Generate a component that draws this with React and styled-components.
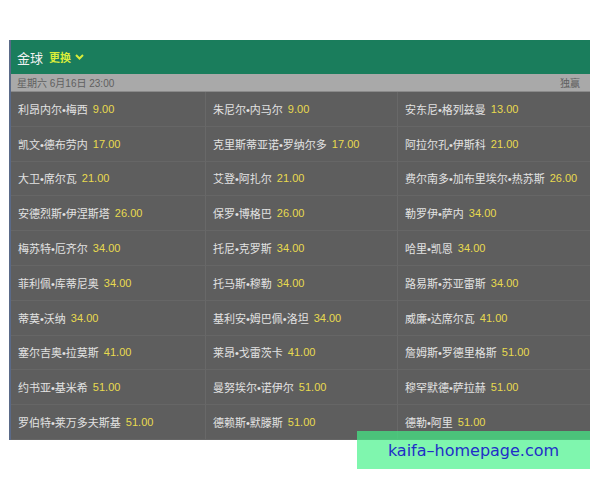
import React from 'react';
import styled, { createGlobalStyle } from 'styled-components';

const GlobalStyle = createGlobalStyle`
    html, body {
        margin: 0;
        padding: 0;
        background: #fff;
    }
    body {
        font-family: "Liberation Sans", "Noto Sans CJK SC", sans-serif;
    }
`;

const Page = styled.div`
    position: relative;
    width: 600px;
    height: 480px;
    padding: 40px 10px 0 9px;
    box-sizing: border-box;
`;

const Panel = styled.div`
    background: #5e5e5e;
    border-left: 2px solid #5a6a88;
    overflow: hidden;
`;

const Header = styled.div`
    height: 34px;
    display: flex;
    align-items: center;
    gap: 6px;
    padding-left: 8px;
    background: #1a7d5c;
    margin-left: -2px;
`;

const Title = styled.span`
    color: #f2f2f2;
    font-size: 13px;
`;

const Switch = styled.span`
    display: flex;
    align-items: center;
    gap: 4px;
    color: #d8ec3a;
    font-size: 11px;
    font-weight: bold;
`;

const DateBar = styled.div`
    height: 17px;
    display: flex;
    align-items: center;
    justify-content: space-between;
    padding: 0 10px 0 8px;
    background: #a9a9a9;
    border-bottom: 1px solid #8a8a8a;
    color: #606060;
    font-size: 10px;
    margin-left: -2px;
`;

const Grid = styled.div`
    display: grid;
    grid-template-columns: 195px 192px 1fr;
`;

const Cell = styled.div`
    height: 34.8px;
    box-sizing: border-box;
    display: flex;
    align-items: center;
    gap: 5px;
    padding-left: 7px;
    border-bottom: 1px solid #666;
    border-right: ${(p) => (p.last ? 'none' : '1px solid #686868')};
    color: #e2e2e2;
    font-size: 11px;
    white-space: nowrap;
    overflow: hidden;
`;

const Odds = styled.span`
    color: #e8da4e;
    font-family: "Liberation Sans", sans-serif;
    font-size: 11px;
`;

const Watermark = styled.div`
    position: absolute;
    left: 357px;
    top: 431px;
    width: 233px;
    height: 38px;
    display: flex;
    align-items: center;
    justify-content: center;
    background: rgba(66, 242, 135, 0.68);
    color: #1f2fc8;
    font-family: "DejaVu Sans", sans-serif;
    font-size: 16px;
`;

const rows = [
    [['利昂内尔•梅西', '9.00'], ['朱尼尔•内马尔', '9.00'], ['安东尼•格列兹曼', '13.00']],
    [['凯文•德布劳内', '17.00'], ['克里斯蒂亚诺•罗纳尔多', '17.00'], ['阿拉尔孔•伊斯科', '21.00']],
    [['大卫•席尔瓦', '21.00'], ['艾登•阿扎尔', '21.00'], ['费尔南多•加布里埃尔•热苏斯', '26.00']],
    [['安德烈斯•伊涅斯塔', '26.00'], ['保罗•博格巴', '26.00'], ['勒罗伊•萨内', '34.00']],
    [['梅苏特•厄齐尔', '34.00'], ['托尼•克罗斯', '34.00'], ['哈里•凯恩', '34.00']],
    [['菲利佩•库蒂尼奥', '34.00'], ['托马斯•穆勒', '34.00'], ['路易斯•苏亚雷斯', '34.00']],
    [['蒂莫•沃纳', '34.00'], ['基利安•姆巴佩•洛坦', '34.00'], ['威廉•达席尔瓦', '41.00']],
    [['塞尔吉奥•拉莫斯', '41.00'], ['莱昂•戈雷茨卡', '41.00'], ['詹姆斯•罗德里格斯', '51.00']],
    [['约书亚•基米希', '51.00'], ['曼努埃尔•诺伊尔', '51.00'], ['穆罕默德•萨拉赫', '51.00']],
    [['罗伯特•莱万多夫斯基', '51.00'], ['德赖斯•默滕斯', '51.00'], ['德勒•阿里', '51.00']],
];

const App = () => {
    return (
        <>
            <GlobalStyle />
            <Page>
                <Panel>
                    <Header>
                        <Title>金球</Title>
                        <Switch>
                            更换
                            <svg width="9" height="6" viewBox="0 0 9 6">
                                <path d="M1 1 L4.5 4.5 L8 1" stroke="#d8ec3a" strokeWidth="2" fill="none" />
                            </svg>
                        </Switch>
                    </Header>
                    <DateBar>
                        <span>星期六 6月16日 23:00</span>
                        <span>独赢</span>
                    </DateBar>
                    <Grid>
                        {rows.map((r, i) =>
                            r.map((c, j) => (
                                <Cell key={`${i}-${j}`} last={j === 2}>
                                    {c[0]}
                                    <Odds>{c[1]}</Odds>
                                </Cell>
                            ))
                        )}
                    </Grid>
                </Panel>
                <Watermark>kaifa–homepage.com</Watermark>
            </Page>
        </>
    );
};

export default App;
